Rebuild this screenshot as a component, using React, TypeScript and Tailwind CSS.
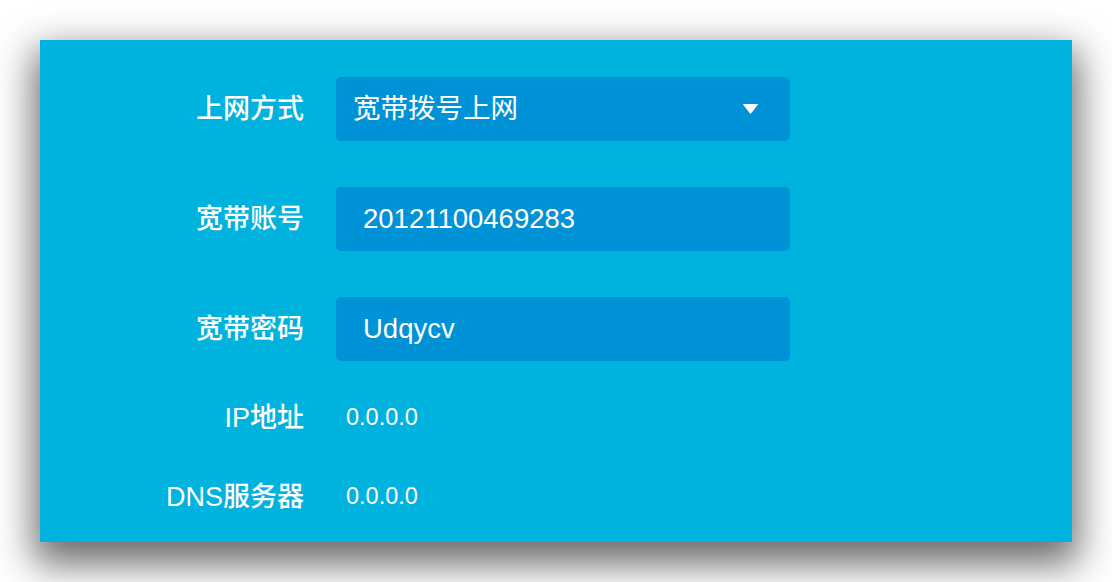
const rows = [
  { label: '宽带账号', value: '20121100469283' },
  { label: '宽带密码', value: 'Udqycv' },
];

const font = { fontFamily: '"Liberation Sans", "Noto Sans CJK SC", sans-serif' };

export default function App() {
  return (
    <div className="min-h-[582px] w-[1112px] bg-white pl-[40px] pt-[40px]" style={font}>
      <div className="h-[502px] w-[1032px] bg-[#00b2de] pt-[37px] text-white shadow-[0_16px_36px_6px_rgba(0,0,0,0.58)]">
        <div className="flex h-[64px] items-center">
          <div className="w-[265px] pr-px text-right text-[27px] font-medium">上网方式</div>
          <div className="ml-[31px] flex h-[64px] w-[454px] items-center justify-between rounded-[5px] bg-[#0092d6] pl-[17px] pr-[32px]">
            <span className="text-[27.5px]">宽带拨号上网</span>
            <svg width="15" height="10" viewBox="0 0 15 10">
              <path d="M0.5 0.5 H14.5 L7.5 9.5 Z" fill="white" stroke="white" strokeLinejoin="round" />
            </svg>
          </div>
        </div>

        {rows.map((r) => (
          <div key={r.label} className="mt-[46px] flex h-[64px] items-center">
            <div className="w-[265px] pr-px text-right text-[27px] font-medium">{r.label}</div>
            <div className="ml-[31px] flex h-[64px] w-[454px] items-center rounded-[5px] bg-[#0092d6] pl-[27px]">
              <span className="text-[27.5px]">{r.value}</span>
            </div>
          </div>
        ))}

        <div className="mt-[37px] flex h-[40px] items-center">
          <div className="w-[265px] pr-px text-right text-[27px] font-medium">IP地址</div>
          <div className="ml-[41px] text-[23.5px]">0.0.0.0</div>
        </div>
        <div className="mt-[39px] flex h-[40px] items-center">
          <div className="w-[265px] pr-px text-right text-[27px] font-medium">DNS服务器</div>
          <div className="ml-[41px] text-[23.5px]">0.0.0.0</div>
        </div>
      </div>
    </div>
  );
}
